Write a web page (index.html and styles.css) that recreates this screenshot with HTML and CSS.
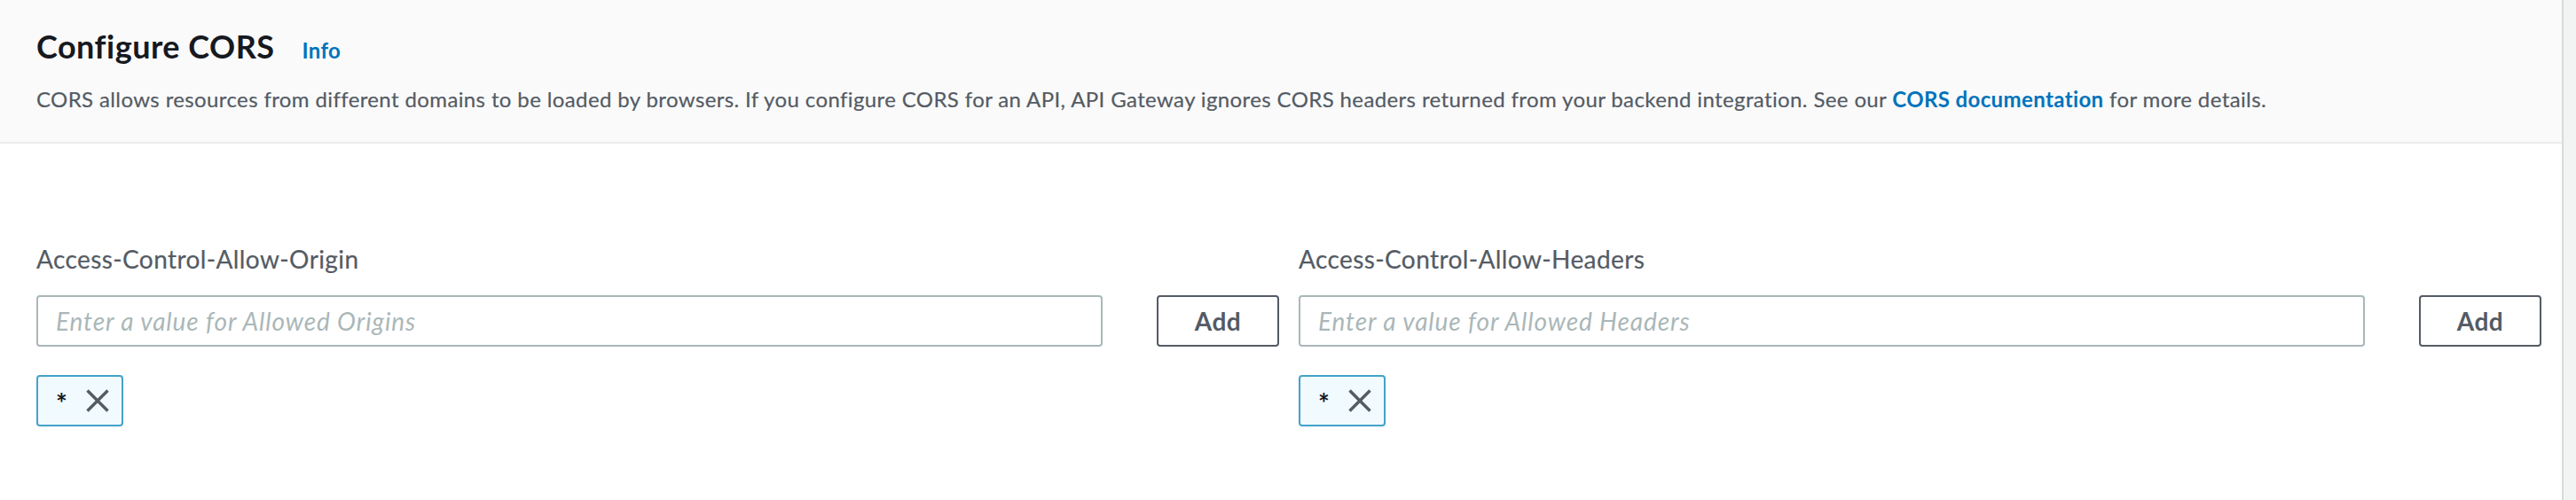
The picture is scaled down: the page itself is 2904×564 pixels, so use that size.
FILE: index.html
```html
<!DOCTYPE html>
<html lang="en">
<head>
<meta charset="utf-8">
<title>Configure CORS</title>
<link rel="stylesheet" href="styles.css">
</head>
<body>
<div class="page">
  <section class="panel">
    <header class="panel-header">
      <h2 class="title">Configure CORS<a class="info" href="#">Info</a></h2>
      <p class="desc">CORS allows resources from different domains to be loaded by browsers. If you configure CORS for an API, API Gateway ignores CORS headers returned from your backend integration. See our <a class="doc-link" href="#">CORS documentation</a> for more details.</p>
    </header>
    <div class="panel-body">
      <div class="grid">
        <div class="field">
          <label class="label">Access-Control-Allow-Origin</label>
          <div class="row">
            <input class="input" type="text" placeholder="Enter a value for Allowed Origins">
            <button class="btn">Add</button>
          </div>
          <div class="tokens">
            <span class="token"><span class="token-text">*</span><svg class="token-x" viewBox="0 0 26 26"><path d="M1.5 1.5 L24.5 24.5 M24.5 1.5 L1.5 24.5"/></svg></span>
          </div>
        </div>
        <div class="field">
          <label class="label">Access-Control-Allow-Headers</label>
          <div class="row">
            <input class="input" type="text" placeholder="Enter a value for Allowed Headers">
            <button class="btn">Add</button>
          </div>
          <div class="tokens">
            <span class="token"><span class="token-text">*</span><svg class="token-x" viewBox="0 0 26 26"><path d="M1.5 1.5 L24.5 24.5 M24.5 1.5 L1.5 24.5"/></svg></span>
          </div>
        </div>
      </div>
    </div>
  </section>
  <div class="side"></div>
</div>
</body>
</html>
```

FILE: styles.css
```css
* { box-sizing: border-box; }

html, body {
  margin: 0;
  padding: 0;
  background: #ffffff;
}

body {
  font-family: Lato, "Open Sans", "Noto Sans", sans-serif;
  color: #545b64;
}

.page {
  display: flex;
  height: 564px;
}

.panel {
  flex: 0 0 2890px;
  border-right: 2px solid #d5dbdb;
  background: #ffffff;
}

.side {
  flex: 1;
  background: #f2f3f3;
}

.panel-header {
  background: #fafafa;
  border-bottom: 2px solid #eaeded;
  height: 162px;
  padding: 30px 40px 0 41px;
}

.title {
  margin: 0;
  font-size: 36px;
  line-height: 44px;
  font-weight: 700;
  letter-spacing: 0.5px;
  color: #16191f;
}

.info {
  margin-left: 31px;
  font-size: 24px;
  font-weight: 700;
  letter-spacing: 0.3px;
  color: #0073bb;
  text-decoration: none;
}

.desc {
  margin: 17px 0 0;
  font-size: 24px;
  line-height: 32px;
  letter-spacing: 0.38px;
  color: #545b64;
  -webkit-text-stroke: 0.2px #545b64;
}

.doc-link {
  color: #0073bb;
  font-weight: 700;
  text-decoration: none;
  -webkit-text-stroke: 0;
}

.panel-body {
  padding: 110px 23px 0 41px;
}

.grid {
  display: grid;
  grid-template-columns: 1fr 1fr;
  column-gap: 22px;
}

.field {
  display: flex;
  flex-direction: column;
}

.label {
  font-size: 28px;
  line-height: 40px;
  letter-spacing: 0.4px;
  color: #545b64;
  -webkit-text-stroke: 0.2px #545b64;
}

.row {
  display: flex;
  margin-top: 21px;
  gap: 61px;
}

.input {
  flex: 1;
  min-width: 0;
  height: 58px;
  border: 2px solid #aab7b8;
  border-radius: 4px;
  padding: 0 20px;
  font-family: inherit;
  font-size: 28px;
  letter-spacing: 0.9px;
  color: #16191f;
  background: #ffffff;
  outline: none;
}

.input::placeholder {
  color: #aab7b8;
  font-style: italic;
}

.btn {
  flex: 0 0 138px;
  height: 58px;
  border: 2px solid #545b64;
  border-radius: 4px;
  background: #ffffff;
  font-family: inherit;
  font-size: 28px;
  font-weight: 700;
  letter-spacing: 0.5px;
  color: #545b64;
  padding: 0;
}

.tokens {
  display: flex;
  margin-top: 32px;
}

.token {
  display: inline-flex;
  align-items: center;
  height: 58px;
  padding: 0 14px 0 20px;
  border: 2px solid #44a2c9;
  border-radius: 4px;
  background: #f1faff;
  gap: 21px;
}

.token-text {
  font-size: 30px;
  font-weight: 700;
  color: #16191f;
  line-height: 1;
  padding-top: 4px;
}

.token-x {
  width: 26px;
  height: 26px;
  fill: none;
  stroke: #545b64;
  stroke-width: 3.4;
}
```
